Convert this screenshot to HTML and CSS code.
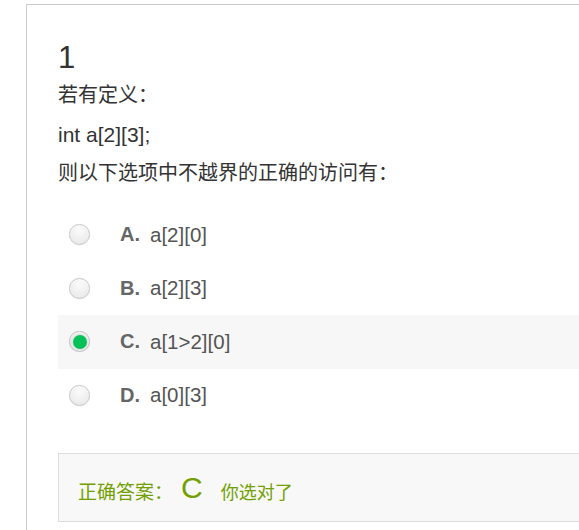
FILE: index.html
```html
<!DOCTYPE html>
<html>
<head>
<meta charset="utf-8">
<link rel="stylesheet" href="styles.css">
</head>
<body>
<div class="card">
  <div class="qnum">1</div>
  <div class="stem">
    <p class="cjk">若有定义：</p>
    <p class="code">int a[2][3];</p>
    <p class="cjk">则以下选项中不越界的正确的访问有：</p>
  </div>
  <ul class="options">
    <li class="opt"><span class="radio"></span><span class="letter">A.</span><span class="val">a[2][0]</span></li>
    <li class="opt"><span class="radio"></span><span class="letter">B.</span><span class="val">a[2][3]</span></li>
    <li class="opt selected"><span class="radio checked"></span><span class="letter">C.</span><span class="val">a[1&gt;2][0]</span></li>
    <li class="opt"><span class="radio"></span><span class="letter">D.</span><span class="val">a[0][3]</span></li>
  </ul>
  <div class="answer">
    <span class="ans-label">正确答案：</span><span class="ans-key">C</span><span class="ans-note">你选对了</span>
  </div>
</div>
</body>
</html>
```

FILE: styles.css
```css
html, body {
  margin: 0;
  padding: 0;
  background: #fff;
  overflow: hidden;
}
body {
  font-family: "Liberation Sans", "Noto Sans CJK SC", sans-serif;
  color: #333;
}
.card {
  box-sizing: border-box;
  margin: 4px 0 0 26px;
  border-top: 1px solid #cccccc;
  border-left: 1px solid #cccccc;
  padding: 35px 0 0 31px;
  height: 526px;
}
.qnum {
  font-size: 31px;
  line-height: 36px;
  color: #333;
}
.stem p {
  margin: 0;
  line-height: 39px;
}
.stem .cjk {
  font-size: 20px;
}
.stem .code {
  font-size: 21px;
}
.options {
  list-style: none;
  margin: 15px 0 0 0;
  padding: 0;
}
.opt {
  display: flex;
  align-items: center;
  height: 53.5px;
  padding-left: 11px;
}
.opt.selected {
  background: #f7f7f7;
}
.radio {
  width: 19px;
  height: 19px;
  border-radius: 50%;
  border: 1px solid #c8c8c8;
  background: radial-gradient(circle at 50% 30%, #fbfbfb 0%, #ececec 70%, #e2e2e2 100%);
  box-shadow: inset 0 1px 1px rgba(255,255,255,0.9), 0 0 1px rgba(0,0,0,0.15);
  flex: none;
  position: relative;
}
.radio.checked {
  background: #e6e6e6;
}
.radio.checked::after {
  content: "";
  position: absolute;
  left: 2.5px;
  top: 2.5px;
  width: 14px;
  height: 14px;
  border-radius: 50%;
  background: #05c158;
}
.letter {
  margin-left: 30px;
  font-weight: bold;
  color: #666;
  font-size: 20px;
  width: 30px;
}
.val {
  color: #555;
  font-size: 20.5px;
}
.answer {
  margin-top: 31px;
  border: 1px solid #dcdcdc;
  border-right: none;
  background: #f8f8f8;
  height: 67px;
  display: flex;
  align-items: center;
  padding-left: 19px;
  color: #72a000;
}
.ans-label {
  font-size: 19px;
  padding-top: 6px;
}
.ans-key {
  font-size: 30px;
  margin-left: 8px;
  margin-right: 18px;
}
.ans-note {
  font-size: 18px;
  padding-top: 6px;
}
```
